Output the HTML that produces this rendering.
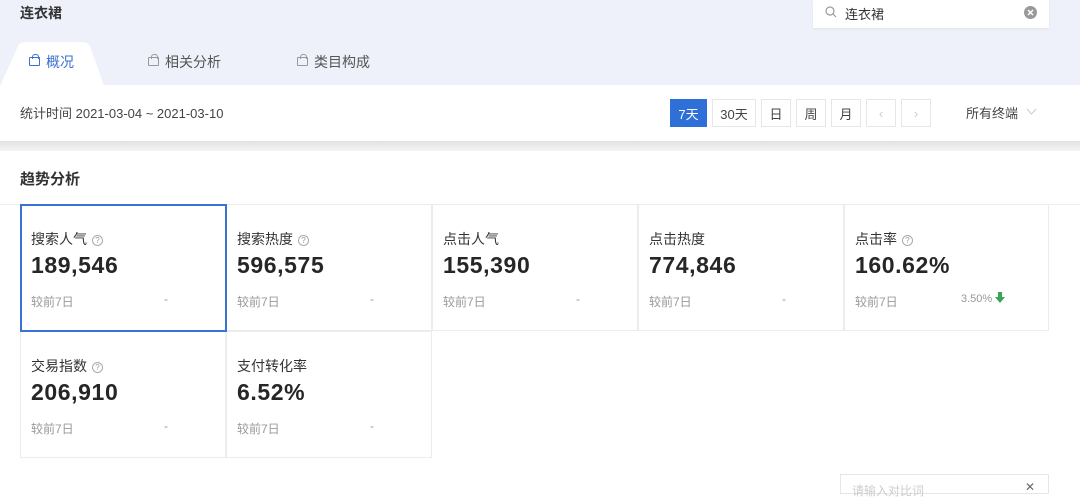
<!DOCTYPE html>
<html><head><meta charset="utf-8"><style>
*{margin:0;padding:0;box-sizing:border-box}
body{width:1080px;height:489px;overflow:hidden;background:#fff;font-family:"Liberation Sans","Noto Sans CJK SC",sans-serif;position:relative;color:#333}
.abs{position:absolute}
.top{left:0;top:0;width:1080px;height:85px;background:#eef1f9}
.tab{top:62px;font-size:14px;color:#555;display:flex;align-items:center;transform:translateY(-50%)}
.bag{width:11px;height:9px;border:1px solid currentColor;border-radius:1px;margin-right:6px;position:relative;top:-1px}
.bag:before{content:"";position:absolute;left:2px;top:-4px;width:5px;height:4px;border:1px solid currentColor;border-bottom:none;border-radius:3px 3px 0 0}
.btn{top:99px;height:28px;border:1px solid #e6e6e6;font-size:13px;color:#444;display:flex;align-items:center;justify-content:center;background:#fff}
.card{position:absolute;width:206px;height:127px;border:1px solid #ececec;background:#fff}
.card .t{position:absolute;left:10px;top:24px;font-size:14px;color:#333}
.card .t i{font-style:normal;display:inline-block;width:11px;height:11px;border:1px solid #aaa;border-radius:50%;font-size:8px;line-height:9px;text-align:center;color:#999;margin-left:5px;vertical-align:1px}
.card .v{position:absolute;left:10px;top:47px;font-size:23px;letter-spacing:0.6px;font-weight:bold;color:#262626}
.card .c{position:absolute;left:10px;top:88px;font-size:12px;color:#999}
.card .d{position:absolute;left:143px;top:87px;font-size:12px;color:#999}
</style></head><body>
<div class="abs top"></div>
<div class="abs" style="left:20px;top:3px;font-size:14px;font-weight:bold;color:#333">连衣裙</div>
<div class="abs" style="left:813px;top:0;width:236px;height:28px;background:#fff;box-shadow:0 1px 2px rgba(0,0,0,.06)"></div>
<svg class="abs" style="left:825px;top:6px" width="12" height="12"><circle cx="5" cy="5" r="4" fill="none" stroke="#999" stroke-width="1.2"/><line x1="8" y1="8" x2="11" y2="11" stroke="#999" stroke-width="1.2"/></svg>
<div class="abs" style="left:845px;top:4px;font-size:13px;color:#333">连衣裙</div>
<svg class="abs" style="left:1024px;top:6px" width="13" height="13"><circle cx="6.5" cy="6.5" r="6.5" fill="#999"/><path d="M4 4L9 9M9 4L4 9" stroke="#fff" stroke-width="1.5"/></svg>
<svg class="abs" style="left:0;top:42px" width="106" height="44"><path d="M0 44 L18 4 Q20 0 26 0 L82 0 Q88 0 90 4 L104 44 Z" fill="#fff"/></svg>
<div class="abs tab" style="left:29px;color:#3d6fd1"><span class="bag"></span>概况</div>
<div class="abs tab" style="left:148px"><span class="bag" style="color:#999"></span>相关分析</div>
<div class="abs tab" style="left:297px"><span class="bag" style="color:#999"></span>类目构成</div>
<div class="abs" style="left:20px;top:103px;font-size:13px;color:#444">统计时间 2021-03-04 ~ 2021-03-10</div>
<div class="abs btn" style="left:670px;width:37px;background:#2f6fd8;border-color:#2f6fd8;color:#fff">7天</div>
<div class="abs btn" style="left:712px;width:44px">30天</div>
<div class="abs btn" style="left:761px;width:30px">日</div>
<div class="abs btn" style="left:796px;width:30px">周</div>
<div class="abs btn" style="left:831px;width:30px">月</div>
<div class="abs btn" style="left:866px;width:30px;color:#ccc">‹</div>
<div class="abs btn" style="left:901px;width:30px;color:#ccc">›</div>
<div class="abs" style="left:966px;top:103px;font-size:13px;color:#444">所有终端</div>
<svg class="abs" style="left:1026px;top:108px" width="11" height="8"><path d="M1 1L5.5 6L10 1" fill="none" stroke="#ccc"/></svg>
<div class="abs" style="left:0;top:141px;width:1080px;height:10px;background:linear-gradient(#e2e2e2,#f4f4f4)"></div>
<div class="abs" style="left:20px;top:168px;font-size:15px;font-weight:bold;color:#333">趋势分析</div>
<div class="abs" style="left:0;top:204px;width:1080px;height:1px;background:#eee"></div>

<div class="card" style="left:20px;top:204px"><div class="t">搜索人气<i>?</i></div><div class="v">189,546</div><div class="c">较前7日</div><div class="d">-</div></div>
<div class="card" style="left:226px;top:204px"><div class="t">搜索热度<i>?</i></div><div class="v">596,575</div><div class="c">较前7日</div><div class="d">-</div></div>
<div class="card" style="left:432px;top:204px"><div class="t">点击人气</div><div class="v">155,390</div><div class="c">较前7日</div><div class="d">-</div></div>
<div class="card" style="left:638px;top:204px"><div class="t">点击热度</div><div class="v">774,846</div><div class="c">较前7日</div><div class="d">-</div></div>
<div class="card" style="left:844px;top:204px;width:205px"><div class="t">点击率<i>?</i></div><div class="v">160.62%</div><div class="c">较前7日</div><div class="d" style="left:116px;font-size:11px">3.50% <svg width="10" height="11" style="vertical-align:-1px"><path d="M3 0H7V5H10L5 11L0 5H3Z" fill="#3aa55a"/></svg></div></div>
<div class="card" style="left:20px;top:331px"><div class="t">交易指数<i>?</i></div><div class="v">206,910</div><div class="c">较前7日</div><div class="d">-</div></div>
<div class="card" style="left:226px;top:331px"><div class="t">支付转化率</div><div class="v">6.52%</div><div class="c">较前7日</div><div class="d">-</div></div>
<div class="abs" style="left:20px;top:204px;width:207px;height:128px;border:2px solid #3a73d4"></div>
<div class="abs" style="left:840px;top:474px;width:209px;height:20px;border:1px solid #e6e6e6"></div>
<div class="abs" style="left:852px;top:482px;font-size:12px;color:#ccc">请输入对比词</div>
<div class="abs" style="left:1025px;top:480px;font-size:12px;color:#666">✕</div>
</body></html>
